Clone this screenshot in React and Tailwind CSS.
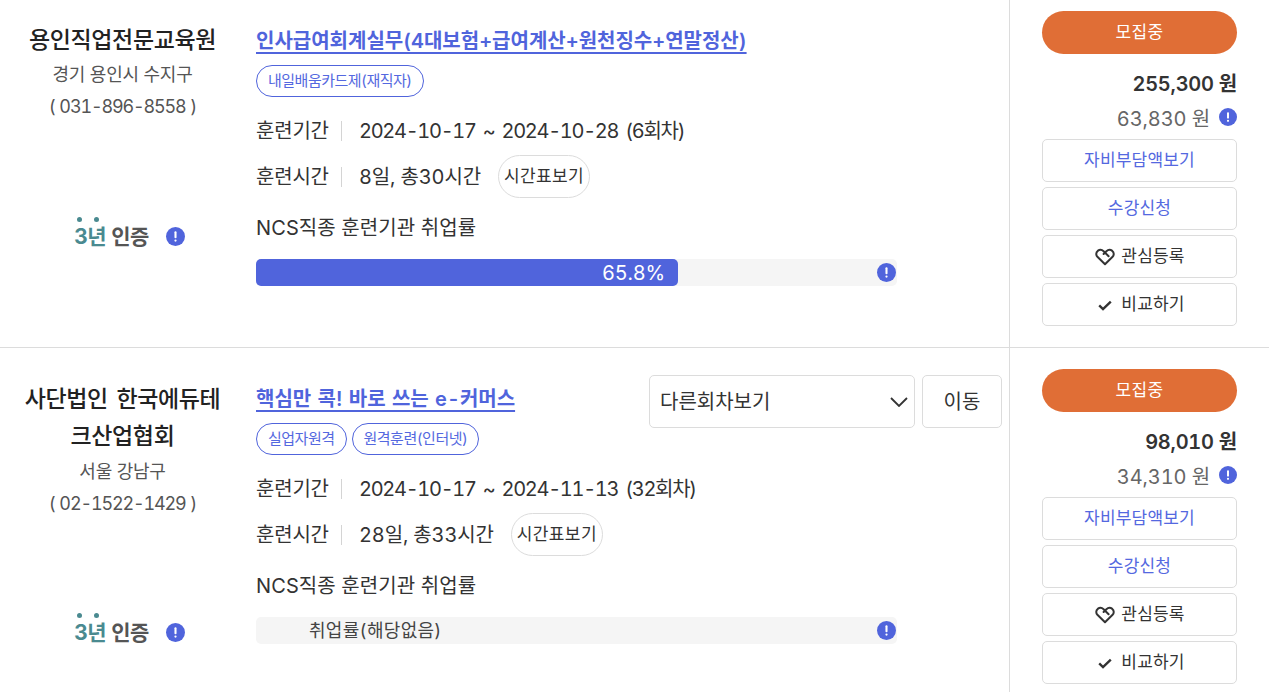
import React from "react";

function Info({ className = "" }) {
  return (
    <svg viewBox="0 0 20 20" className={"shrink-0 " + className}>
      <circle cx="10" cy="10" r="10" fill="#5064dc" />
      <rect x="8.9" y="4.6" width="2.2" height="7.2" rx="1" fill="#fff" />
      <circle cx="10" cy="14.3" r="1.2" fill="#fff" />
    </svg>
  );
}

function Heart() {
  return (
    <svg viewBox="0 0 20 18" className="w-[20px] h-[18px]" fill="none" stroke="#333" strokeWidth="2" strokeLinejoin="round" strokeLinecap="round">
      <path d="M10 16.2 2.4 8.8C.8 7.2.9 4.4 2.7 2.9 4.5 1.5 7 1.7 8.6 3.2L13.6 8.2M10 16.2 17.6 8.8C19.2 7.2 19.1 4.4 17.3 2.9 15.5 1.5 13 1.7 11.4 3.2L8.6 6" />
    </svg>
  );
}

function Check() {
  return (
    <svg viewBox="0 0 14 11" className="w-[14px] h-[11px]" fill="none" stroke="#333" strokeWidth="2.4">
      <path d="M1.2 5.4 5 9 12.8 1.6" />
    </svg>
  );
}

function Cert() {
  return (
    <span className="relative flex items-center text-[21px] font-bold tracking-[-0.5px] leading-none">
      <span className="relative text-[#4a8a90]">
        3년
        <span className="absolute left-[3px] top-[-9px] w-[5px] h-[5px] rounded-full bg-[#4a8a90]" />
        <span className="absolute left-[20px] top-[-9px] w-[5px] h-[5px] rounded-full bg-[#4a8a90]" />
      </span>
      <span className="ml-[5px] text-[#555]">인증</span>
    </span>
  );
}

function ActionBtn({ children, blue, extra = "" }) {
  return (
    <div className={"h-[43px] w-[195px] shrink-0 rounded-[5px] border border-[#dcdcdc] bg-white flex items-center justify-center gap-[6px] pt-[1px] text-[17px] tracking-[0.2px] " + extra + " " + (blue ? "text-[#5468e0]" : "text-[#333]")}>
      {children}
    </div>
  );
}

function Row({ org, loc, phone, title, tags, period, hours, rate, price, self, twoLine, withSelect, border, offset }) {
  return (
    <div className={"flex h-[348px] shrink-0 " + (border ? "border-b border-[#dcdcdc]" : "")}>
      <div className={"w-[245px] shrink-0 flex flex-col items-center text-center " + (offset ? "pt-[33px]" : "pt-[22px]")}>
        <div className={"text-[23px] font-medium leading-[37px] text-[#222] tracking-[-0.4px] [word-spacing:3px] " + (twoLine ? "w-[205px] break-all mb-[1px]" : "")}>{org}</div>
        <div className="text-[18px] leading-[32px] text-[#555] tracking-[-0.2px]">{loc}</div>
        <div className="text-[18px] leading-[32px] text-[#555] tracking-[-1.15px] [word-spacing:1px]">( {phone} )</div>
        <div className={"flex items-center gap-[17px] ml-[14px] " + (twoLine ? "mt-[102px]" : "mt-[103px]")}>
          <Cert />
          <Info className="w-[19px] h-[19px]" />
        </div>
      </div>
      <div className={"flex-1 min-w-0 pl-[11px] relative " + (offset ? "pt-[33px]" : "pt-[23px]")}>
        <div className="text-[20px] leading-[37px] font-semibold text-[#5064dc] underline decoration-2 underline-offset-[4px] [word-spacing:1px]">{title}</div>
        <div className="flex gap-[5px] mt-[5px]">
          {tags.map((t) => (
            <span key={t} className="h-[32px] px-[11px] rounded-full border border-[#5064dc] text-[#5468e0] text-[15px] tracking-[-0.5px] flex items-center bg-white">{t}</span>
          ))}
        </div>
        <div className="flex items-center text-[20px] text-[#333] mt-[14px] h-[40px]">
          <span className="tracking-[-0.2px] w-[73px]">훈련기간</span>
          <span className="w-px h-[20px] bg-[#d4d4d4] ml-[12px] mr-[17px]" />
          <span className="tracking-[-1.3px] [word-spacing:3px]">{period}</span>
        </div>
        <div className="flex items-center text-[20px] text-[#333] mt-[4px] h-[43px]">
          <span className="tracking-[-0.2px] w-[73px]">훈련시간</span>
          <span className="w-px h-[20px] bg-[#d4d4d4] ml-[12px] mr-[17px]" />
          <span className="tracking-[-0.15px]">{hours}</span>
          <span className="ml-[17px] h-[43px] px-[5px] rounded-full border border-[#dcdcdc] text-[17px] tracking-[0.4px] text-[#333] flex items-center">시간표보기</span>
        </div>
        <div className="text-[20px] text-[#333] mt-[8px] h-[43px] flex items-center tracking-[0.1px]">NCS직종 훈련기관 취업률</div>
        <div className="relative mt-[10px] h-[27px] w-[641px] rounded-[5px] bg-[#f5f5f5]">
          {rate ? (
            <div className="h-full w-[422px] rounded-[5px] bg-[#5064dc] text-white text-[20px] flex items-center justify-end pr-[13px] tracking-[-0.2px]">{rate}</div>
          ) : (
            <div className="h-full pl-[53px] text-[18px] text-[#444] flex items-center tracking-[0.3px]">취업률(해당없음)</div>
          )}
          <Info className="absolute right-[1px] top-[4px] w-[19px] h-[19px]" />
        </div>
        {withSelect && (
          <div className="absolute right-[7px] top-[27px] flex gap-[7px]">
            <div className="w-[266px] h-[53px] rounded-[5px] border border-[#dcdcdc] bg-white flex items-center justify-between pl-[10px] pr-[6px] text-[20px] text-[#333]">
              다른회차보기
              <svg viewBox="0 0 18 10" className="w-[18px] h-[10px]" fill="none" stroke="#333" strokeWidth="1.8"><path d="M1 1l8 8 8-8" /></svg>
            </div>
            <div className="w-[80px] h-[53px] rounded-[5px] border border-[#dcdcdc] bg-white flex items-center justify-center text-[20px] text-[#333]">이동</div>
          </div>
        )}
      </div>
      <div className={"w-[260px] shrink-0 border-l border-[#dcdcdc] pl-[32px] flex flex-col " + (offset ? "pt-[21px]" : "pt-[11px]")}>
        <div className="h-[43px] w-[195px] rounded-full bg-[#e06e36] text-white text-[17px] flex items-center justify-center tracking-[0.3px]">모집중</div>
        <div className="w-[195px] h-[32px] mt-[14px] flex items-center justify-end text-[20px] font-semibold text-[#333] tracking-[-0.25px]">{price} 원</div>
        <div className="w-[195px] h-[36px] mt-[1px] flex items-center justify-end gap-[9px] text-[20px] text-[#666] tracking-[-0.1px]">
          <span>{self} 원</span>
          <Info className="w-[18px] h-[18px] mb-[4px]" />
        </div>
        <div className="flex flex-col gap-[5px] mt-[2px]">
          <ActionBtn blue>자비부담액보기</ActionBtn>
          <ActionBtn blue>수강신청</ActionBtn>
          <ActionBtn extra="pl-[1px]"><Heart />관심등록</ActionBtn>
          <ActionBtn extra="pl-[4px]"><span className="mr-[3px] flex"><Check /></span>비교하기</ActionBtn>
        </div>
      </div>
    </div>
  );
}

export default function App() {
  return (
    <div className="w-[1269px] h-[692px] overflow-hidden bg-white tabular-nums font-['Inter','Noto_Sans_CJK_KR',sans-serif] flex flex-col">
      <Row
        border
        org="용인직업전문교육원"
        loc="경기 용인시 수지구"
        phone="031-896-8558"
        title="인사급여회계실무(4대보험+급여계산+원천징수+연말정산)"
        tags={["내일배움카드제(재직자)"]}
        period="2024-10-17 ~ 2024-10-28 (6회차)"
        hours="8일, 총30시간"
        rate="65.8%"
        price="255,300"
        self="63,830"
      />
      <Row
        offset
        twoLine
        withSelect
        org="사단법인 한국에듀테크산업협회"
        loc="서울 강남구"
        phone="02-1522-1429"
        title="핵심만 콕! 바로 쓰는 e-커머스"
        tags={["실업자원격", "원격훈련(인터넷)"]}
        period="2024-10-17 ~ 2024-11-13 (32회차)"
        hours="28일, 총33시간"
        price="98,010"
        self="34,310"
      />
    </div>
  );
}
